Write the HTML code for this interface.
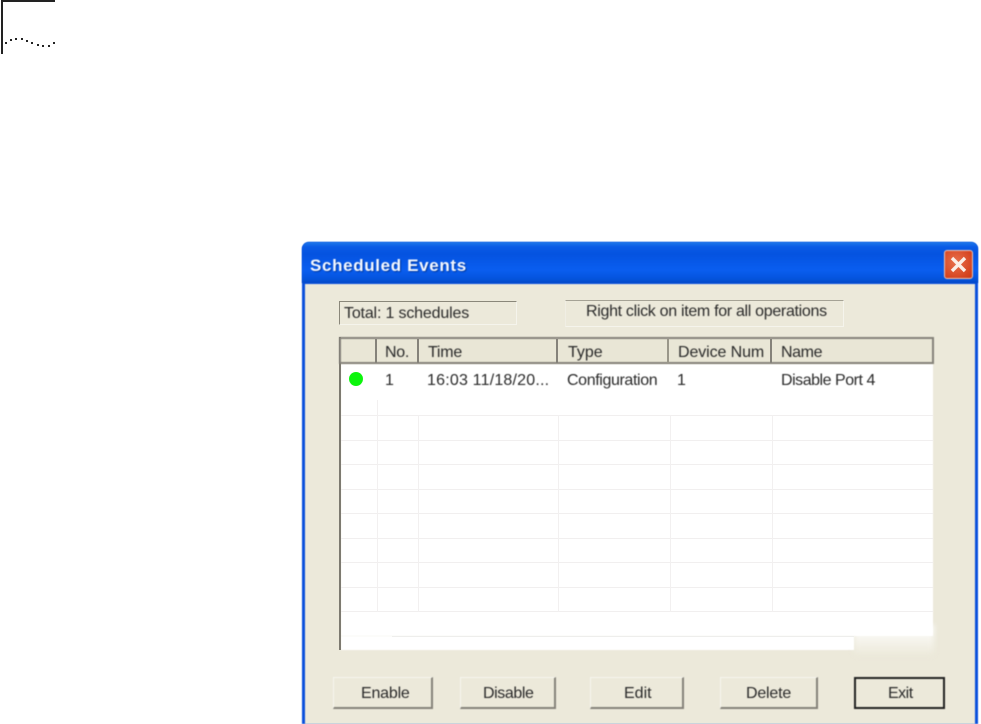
<!DOCTYPE html>
<html>
<head>
<meta charset="utf-8">
<style>
html,body{margin:0;padding:0;background:#fff;}
#page{position:relative;width:981px;height:724px;overflow:hidden;background:#fff;font-family:"Liberation Sans",sans-serif;color:#222;}
.a{position:absolute;}
.t{position:absolute;font-size:16px;line-height:16px;white-space:nowrap;color:#2a2a2a;filter:blur(.4px);}
.btn{position:absolute;top:677px;height:32px;box-sizing:border-box;border-right:2px solid #85827a;border-bottom:2px solid #85827a;border-top:1px solid #f6f5ee;border-left:1px solid #f6f5ee;background:#ece9da;filter:blur(.5px);}
.h{position:absolute;height:1px;left:341px;width:592px;background:#f1efef;}
.v{position:absolute;width:1px;top:364px;height:270px;background:#f2f0f0;}
</style>
</head>
<body>
<div id="page">
  <!-- corner mark -->
  <div class="a" style="left:1px;top:0;width:2px;height:54px;background:#222"></div>
  <div class="a" style="left:1px;top:0;width:54px;height:2px;background:#222"></div>
  <svg class="a" style="left:0;top:0" width="60" height="54">
    <g fill="#222">
      <rect x="5" y="42" width="2" height="2"/><rect x="10" y="39" width="2" height="2"/><rect x="15" y="38" width="2" height="2"/><rect x="21" y="38" width="2" height="2"/><rect x="26" y="40" width="2" height="2"/><rect x="31" y="42" width="2" height="2"/><rect x="37" y="44" width="2" height="2"/><rect x="42" y="45" width="2" height="2"/><rect x="48" y="45" width="2" height="2"/><rect x="53" y="42" width="2" height="2"/>
    </g>
  </svg>

  <!-- window -->
  <div class="a" style="left:302px;top:242px;width:676px;height:482px;border-radius:7px 7px 0 0;background:#0a50dc;filter:blur(.4px)"></div>
  <div class="a" style="left:302px;top:242px;width:676px;height:41px;border-radius:7px 7px 0 0;background:linear-gradient(#1f78ea 0,#0a5be6 5px,#0553e0 12px,#0a5ef0 28px,#0453dc 37px,#0449c8 41px);filter:blur(.4px)"></div>
  <div class="a" style="left:305px;top:284px;width:670px;height:440px;background:#ece9da;filter:blur(.5px)"></div>

  <div class="t" style="left:310px;top:256px;font-size:17px;line-height:20px;font-weight:bold;color:#f4f8ff;letter-spacing:.65px;text-shadow:1px 1px 1px #03389c">Scheduled Events</div>

  <!-- close -->
  <div class="a" style="left:944px;top:250px;width:29px;height:29px;box-sizing:border-box;border:1px solid #efc4b4;border-radius:3px;background:radial-gradient(circle at 40% 40%,#e8704c,#d5431f 75%,#c63a18);filter:blur(.4px)"></div>
  <svg class="a" style="left:944px;top:250px" width="29" height="29"><path d="M8 8L21 21M21 8L8 21" stroke="#fbeee6" stroke-width="3.4" fill="none"/></svg>

  <!-- status boxes -->
  <div class="a" style="left:339px;top:301px;width:178px;height:24px;box-sizing:border-box;border-top:1px solid #8a877a;border-left:1px solid #8a877a;border-right:1px solid #f5f4ec;border-bottom:1px solid #f5f4ec;filter:blur(.3px)"></div>
  <div class="t" style="left:344px;top:306px;letter-spacing:-.17px">Total: 1 schedules</div>
  <div class="a" style="left:565px;top:300px;width:279px;height:27px;box-sizing:border-box;border-top:1px solid #a5a295;border-left:1px solid #f0eee4;border-right:1px solid #f5f4ec;border-bottom:1px solid #f5f4ec;filter:blur(.3px)"></div>
  <div class="t" style="left:586px;top:304px;letter-spacing:-.31px">Right click on item for all operations</div>

  <!-- list -->
  <div class="a" style="left:854px;top:625px;width:80px;height:30px;background:linear-gradient(#fff,#ece9da);filter:blur(3px)"></div>
  <div class="a" style="left:341px;top:364px;width:592px;height:272px;background:#fff;filter:blur(.4px)"></div>
  <div class="a" style="left:341px;top:636px;width:513px;height:14px;background:#fff;filter:blur(.6px)"></div>
  <div class="a" style="left:339px;top:337px;width:2px;height:313px;background:#7d7a70;filter:blur(.3px)"></div>
  <div class="a" style="left:339px;top:337px;width:595px;height:27px;box-sizing:border-box;border:2px solid #85827a;background:#e9e6d6;filter:blur(.5px)"></div>
  <div class="a" style="left:375px;top:339px;width:2px;height:24px;background:#85827a;filter:blur(.3px)"></div>
  <div class="a" style="left:417px;top:339px;width:2px;height:24px;background:#85827a;filter:blur(.3px)"></div>
  <div class="a" style="left:556px;top:339px;width:2px;height:24px;background:#85827a;filter:blur(.3px)"></div>
  <div class="a" style="left:667px;top:339px;width:2px;height:24px;background:#9a978a;filter:blur(.3px)"></div>
  <div class="a" style="left:770px;top:339px;width:2px;height:24px;background:#85827a;filter:blur(.3px)"></div>

  <div class="t" style="left:385px;top:345px;letter-spacing:-.3px">No.</div>
  <div class="t" style="left:428px;top:345px;letter-spacing:-.25px">Time</div>
  <div class="t" style="left:568px;top:345px;">Type</div>
  <div class="t" style="left:678px;top:345px;letter-spacing:-.1px">Device Num</div>
  <div class="t" style="left:781px;top:345px;letter-spacing:-.4px">Name</div>

  <!-- grid -->
  <div class="h" style="top:415px"></div>
  <div class="h" style="top:440px"></div>
  <div class="h" style="top:464px"></div>
  <div class="h" style="top:489px"></div>
  <div class="h" style="top:513px"></div>
  <div class="h" style="top:538px"></div>
  <div class="h" style="top:562px"></div>
  <div class="h" style="top:587px"></div>
  <div class="h" style="top:611px"></div>
  <div class="a" style="left:392px;top:636px;width:462px;height:1px;background:#eeeeec"></div>
  <div class="v" style="left:377px;top:400px;height:212px"></div>
  <div class="v" style="left:418px;top:415px;height:197px"></div>
  <div class="v" style="left:558px;top:415px;height:197px"></div>
  <div class="v" style="left:670px;top:415px;height:197px"></div>
  <div class="v" style="left:772px;top:415px;height:197px"></div>

  <!-- row -->
  <div class="a" style="left:349px;top:372px;width:14px;height:14px;border-radius:50%;background:#0cf50c;filter:blur(.3px)"></div>
  <div class="t" style="left:385px;top:373px;">1</div>
  <div class="t" style="left:427px;top:373px;letter-spacing:.2px">16:03 11/18/20...</div>
  <div class="t" style="left:567px;top:373px;letter-spacing:-.38px">Configuration</div>
  <div class="t" style="left:677px;top:373px;">1</div>
  <div class="t" style="left:781px;top:373px;letter-spacing:-.47px">Disable Port 4</div>

  <!-- buttons -->
  <div class="btn" style="left:333px;width:100px"></div>
  <div class="t" style="left:361px;top:686px;letter-spacing:-.2px">Enable</div>
  <div class="btn" style="left:460px;width:96px"></div>
  <div class="t" style="left:483px;top:686px;letter-spacing:-.4px">Disable</div>
  <div class="btn" style="left:590px;width:94px"></div>
  <div class="t" style="left:624px;top:686px;">Edit</div>
  <div class="btn" style="left:720px;width:98px"></div>
  <div class="t" style="left:746px;top:686px;letter-spacing:-.2px">Delete</div>
  <div class="btn" style="left:854px;width:91px;border:2px solid #222"></div>
  <div class="t" style="left:888px;top:686px;letter-spacing:-.5px">Exit</div>
</div>
</body>
</html>
